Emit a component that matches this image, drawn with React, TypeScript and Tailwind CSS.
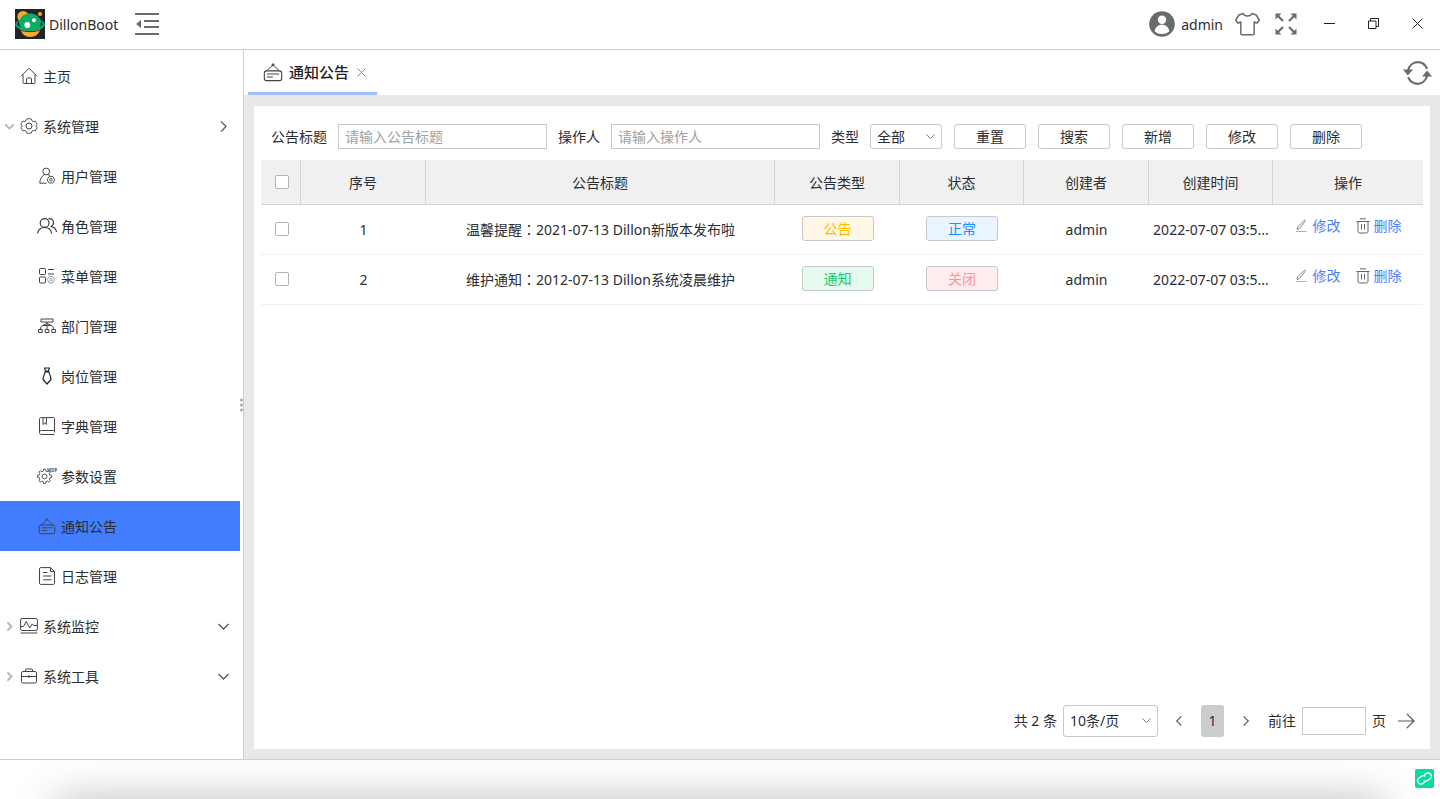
import { useState, type ReactNode } from "react";

type IconProps = { className?: string };

const actionLink = "flex items-center gap-1 text-[#4a80ff] hover:underline";

const systemMenu = [
    { name: "用户管理", icon: UserIcon },
    { name: "角色管理", icon: RoleIcon },
    { name: "菜单管理", icon: MenuIcon },
    { name: "部门管理", icon: DeptIcon },
    { name: "岗位管理", icon: TieIcon },
    { name: "字典管理", icon: BookIcon },
    { name: "参数设置", icon: ConfigIcon },
    { name: "通知公告", icon: NoticeIcon },
    { name: "日志管理", icon: LogIcon },
];

const notices = [
    { id: 1, subject: "温馨提醒", title: "2021-07-13 Dillon新版本发布啦", type: "公告", status: "正常", creator: "admin", time: "2022-07-07 03:5..." },
    { id: 2, subject: "维护通知", title: "2012-07-13 Dillon系统凌晨维护", type: "通知", status: "关闭", creator: "admin", time: "2022-07-07 03:5..." },
];

const tagColors: Record<string, string> = {
    公告: "bg-[#fff8e6] text-[#ffba00]",
    通知: "bg-[#e7faf0] text-[#13ce66]",
    正常: "bg-[#e8f4ff] text-[#1890ff]",
    关闭: "bg-[#ffeded] text-[#ff9292]",
};

export default function App() {
    const [active, setActive] = useState("通知公告");

    return (
        <div className="flex min-h-screen flex-col bg-white font-['Noto_Sans','Noto_Sans_CJK_SC',sans-serif] text-sm leading-5 text-[#2b2d30]">
            <Header />
            <div className="flex flex-1">
                <Sidebar active={active} onSelect={setActive} />
                <main className="flex min-w-0 flex-1 flex-col bg-[#e8e8e8]">
                    <TabBar />
                    <section className="mx-[10px] mt-[11px] mb-[10px] flex flex-1 flex-col bg-white px-[7px] pt-[18px] pb-3">
                        <FilterBar />
                        <NoticeTable />
                        <Pagination />
                    </section>
                </main>
            </div>
            <footer className="relative flex h-10 items-center justify-end overflow-hidden border-t border-[#cfcfcf] px-1.5 pb-0.5">
                <div className="absolute top-full right-14 left-14 h-20 shadow-[0_0_44px_rgba(0,0,0,0.26)]" />
                <button aria-label="连接状态" className="relative flex h-[19px] w-[19px] items-center justify-center rounded-[2px] bg-[#05dba2] text-white">
                    <LinkIcon />
                </button>
            </footer>
        </div>
    );
}

function Header() {
    return (
        <header className="flex h-[50px] items-center border-b border-[#cfcfcf] pr-[17px] pb-0.5 pl-[15px]">
            <Logo />
            <span className="ml-1 pt-0.5">DillonBoot</span>
            <button aria-label="收起菜单" className="ml-[17px] text-[#6b6b6b]">
                <svg width="24" height="24" viewBox="0 0 24 24" fill="none" stroke="currentColor" strokeWidth="2">
                    <path d="M0 2h24M9 9h15M9 15h15M0 22h24" />
                    <path d="M6 8v8L1 12z" fill="currentColor" stroke="none" />
                </svg>
            </button>
            <div className="ml-auto flex items-center text-[#6b6b6b]">
                <svg width="26" height="26" viewBox="0 0 26 26">
                    <circle cx="13" cy="13" r="12.8" fill="currentColor" />
                    <circle cx="13" cy="8.8" r="4.2" fill="#fff" />
                    <path d="M5.8 20.4c.3-4.2 3.3-6.6 7.2-6.6s6.9 2.4 7.2 6.6c-1.9 1.7-4.4 2.5-7.2 2.5s-5.3-.8-7.2-2.5z" fill="#fff" />
                </svg>
                <span className="ml-1.5 pt-0.5 text-[#2b2d30]">admin</span>
                <button aria-label="主题" className="ml-3">
                    <svg width="25" height="24" viewBox="0 0 25 24" fill="none" stroke="currentColor" strokeWidth="1.5" strokeLinejoin="round">
                        <path d="M8 1.5 3.8 3 .8 8l2 3 3-1v11.5c0 .8.5 1.300 1.3 1.3h10.800c.8 0 1.3-.5 1.3-1.3V10l3 1 2-3-3-5L17 1.5c-.8 1.600-2.4 2.5-4.5 2.5S8.800 3.1 8 1.5z" />
                    </svg>
                </button>
                <button aria-label="全屏" className="ml-[15px]">
                    <svg width="22" height="22" viewBox="0 0 22 22" fill="currentColor" stroke="currentColor">
                        <path d="M3 3l5 5M19 3l-5 5M3 19l5-5M19 19l-5-5" strokeWidth="2.2" />
                        <path d="M.5.5h6l-6 6zM21.5.5h-6l6 6zM.5 21.5h6l-6-6zM21.5 21.5h-6l6-6z" stroke="none" />
                    </svg>
                </button>
                <div className="ml-[27px] flex items-center gap-[33px] text-[#222]">
                    <button aria-label="最小化">
                        <svg width="11" height="11" viewBox="0 0 11 11" stroke="currentColor"><path d="M0 5.5h11" /></svg>
                    </button>
                    <button aria-label="还原">
                        <svg width="11" height="11" viewBox="0 0 11 11" fill="none" stroke="currentColor">
                            <path d="M.5 3H8v7.5H.5zM2.5 3V.5h8v8H8" />
                        </svg>
                    </button>
                    <button aria-label="关闭">
                        <svg width="11" height="11" viewBox="0 0 11 11" stroke="currentColor"><path d="M.5.5l10 10M10.5.5l-10 10" /></svg>
                    </button>
                </div>
            </div>
        </header>
    );
}

function Sidebar({ active, onSelect }: { active: string; onSelect: (name: string) => void }) {
    return (
        <aside className="relative w-[244px] shrink-0 border-r border-[#cfcfcf] bg-white pt-px">
            <nav className="w-60">
                <MenuGroup name="主页" icon={<HomeIcon />} />
                <MenuGroup name="系统管理" icon={<GearIcon />} open />
                {systemMenu.map(({ name, icon: Icon }) => (
                    <a
                        key={name}
                        href="#"
                        onClick={(e) => { e.preventDefault(); onSelect(name); }}
                        className={`flex h-[50px] items-center pl-[37px] ${active === name ? "bg-[#437dff]" : "hover:bg-gray-50"}`}
                    >
                        <span className="flex w-5 justify-center"><Icon /></span>
                        <span className="ml-1 pt-0.5">{name}</span>
                    </a>
                ))}
                <MenuGroup name="系统监控" icon={<MonitorIcon />} open={false} />
                <MenuGroup name="系统工具" icon={<ToolIcon />} open={false} />
            </nav>
            <div className="absolute top-1/2 right-0 flex -translate-y-1/2 flex-col gap-0.5">
                {[0, 1, 2].map((i) => <i key={i} className="h-[3px] w-[3px] rounded-full bg-[#a8a8a8]" />)}
            </div>
        </aside>
    );
}

// open is left out for entries that have no children
function MenuGroup({ name, icon, open }: { name: string; icon: ReactNode; open?: boolean }) {
    return (
        <a href="#" className="flex h-[50px] items-center pr-[11px] pl-1 hover:bg-gray-50">
            <span className="flex w-[10px] justify-center text-[#b4b4b4]">
                {open !== undefined && <Chevron className={open ? "h-[9px] w-[9px] stroke-2" : "h-[9px] w-[9px] -rotate-90 stroke-2"} />}
            </span>
            <span className="ml-[5px] flex w-5 justify-center">{icon}</span>
            <span className="ml-1 pt-0.5">{name}</span>
            {open !== undefined && (
                <Chevron className={open ? "ml-auto h-[11px] w-[11px] -rotate-90 text-[#555]" : "ml-auto h-[11px] w-[11px] text-[#555]"} />
            )}
        </a>
    );
}

function TabBar() {
    return (
        <div className="flex h-[45px] items-center justify-between bg-white pr-2 pl-1">
            <div className="flex h-full items-center border-b-[3px] border-[#a3bfff] pt-0.5 pr-[11px] pl-[15px]">
                <NoticeIcon className="h-5 w-5" />
                <span className="ml-1.5 text-[15px] font-medium text-[#1f2124]">通知公告</span>
                <button aria-label="关闭标签" className="ml-2 text-[#888]">
                    <svg width="9" height="9" viewBox="0 0 9 9" stroke="currentColor"><path d="M.5.5l8 8M8.5.5l-8 8" /></svg>
                </button>
            </div>
            <button aria-label="刷新" className="text-[#6b6b6b]">
                <svg width="29" height="26" viewBox="0 0 29 26" fill="none" stroke="currentColor" strokeWidth="2.2">
                    <path d="M5 10.5C6.200 5.5 10 2.2 14.6 2.2c4.2 0 7.8 2.6 9.4 6.6M24.2 15.5c-1.200 5-5 8.300-9.600 8.300-4.2 0-7.800-2.6-9.400-6.600" />
                    <path d="M0 9.5h10l-5.200 6zM29 16.5H19l5.200-6z" fill="currentColor" stroke="none" />
                </svg>
            </button>
        </div>
    );
}

function FilterBar() {
    const field = "h-[25px] w-[209px] border border-[#c8c8c8] bg-white px-1.5 outline-none placeholder:text-[#a0a0a0]";
    return (
        <form className="flex items-center gap-3 pl-[10px]" onSubmit={(e) => e.preventDefault()}>
            <div className="flex items-center gap-[11px]">
                <label htmlFor="title">公告标题</label>
                <input id="title" placeholder="请输入公告标题" className={field} />
                <label htmlFor="operator">操作人</label>
                <input id="operator" placeholder="请输入操作人" className={field} />
                <label htmlFor="type">类型</label>
                <div className="relative">
                    <select id="type" className="block h-[25px] w-[72px] appearance-none rounded-[3px] border border-[#c8c8c8] bg-white px-1.5">
                        <option>全部</option>
                        <option>通知</option>
                        <option>公告</option>
                    </select>
                    <Chevron className="pointer-events-none absolute top-2 right-[7px] h-[9px] w-[9px] text-[#777]" />
                </div>
            </div>
            {["重置", "搜索", "新增", "修改", "删除"].map((text) => (
                <button key={text} className="h-[25px] w-[72px] rounded-[3px] border border-[#c8c8c8] bg-white hover:bg-gray-50">
                    {text}
                </button>
            ))}
        </form>
    );
}

function NoticeTable() {
    const th = "border-r border-b border-[#d4d4d4] pt-0.5 font-normal last:border-r-0";
    const td = "border-b border-[#f0f0f0] text-center";
    return (
        <table className="mt-[11px] w-full table-fixed border-separate border-spacing-0">
            <colgroup>
                <col className="w-10" />
                <col className="w-[125px]" />
                <col />
                <col className="w-[125px]" />
                <col className="w-[124px]" />
                <col className="w-[125px]" />
                <col className="w-[124px]" />
                <col className="w-[150px]" />
            </colgroup>
            <thead className="bg-[#f0f0f0]">
                <tr className="h-[45px]">
                    <th className="border-r border-b border-[#d4d4d4] pl-[14px]"><CheckBox label="全选" /></th>
                    {["序号", "公告标题", "公告类型", "状态", "创建者", "创建时间", "操作"].map((name) => (
                        <th key={name} className={th}>{name}</th>
                    ))}
                </tr>
            </thead>
            <tbody>
                {notices.map((n) => (
                    <tr key={n.id} className="h-[50px]">
                        <td className={`${td} pb-0.5 pl-[14px]`}><CheckBox label={`选择 ${n.id}`} /></td>
                        <td className={td}>{n.id}</td>
                        <td className={td}>
                            {n.subject}<span className="font-['Noto_Sans_CJK_TC',sans-serif]" lang="zh-TW">：</span>{n.title}
                        </td>
                        <td className={`${td} pb-0.5`}><Tag text={n.type} /></td>
                        <td className={`${td} pb-0.5`}><Tag text={n.status} /></td>
                        <td className={td}>{n.creator}</td>
                        <td className={td}>{n.time}</td>
                        <td className={`${td} pb-2`}>
                            <div className="flex items-center justify-center gap-[15px]">
                                <a href="#" className={actionLink}><EditIcon />修改</a>
                                <a href="#" className={actionLink}><TrashIcon />删除</a>
                            </div>
                        </td>
                    </tr>
                ))}
            </tbody>
        </table>
    );
}

function Tag({ text }: { text: string }) {
    return (
        <span className={`mx-auto flex h-[25px] w-[72px] items-center justify-center rounded-[3px] border border-[#c8c8c8] ${tagColors[text]}`}>
            {text}
        </span>
    );
}

function CheckBox({ label }: { label: string }) {
    return (
        <input
            type="checkbox"
            aria-label={label}
            className="block h-[14px] w-[14px] appearance-none rounded-[2px] border border-[#b4b4b4] bg-white checked:bg-[#437dff]"
        />
    );
}

function Pagination() {
    return (
        <div className="mt-auto flex h-8 items-center justify-end pr-2">
            <span>共 2 条</span>
            <div className="relative ml-1.5">
                <select aria-label="每页条数" className="block h-8 w-[95px] appearance-none rounded-[3px] border border-[#c8c8c8] bg-white px-1.5">
                    <option>10条/页</option>
                    <option>20条/页</option>
                </select>
                <Chevron className="pointer-events-none absolute top-[11px] right-[7px] h-[9px] w-[9px] text-[#777]" />
            </div>
            <button aria-label="上一页" className="ml-4 text-[#555]"><Chevron className="h-[10px] w-[10px] rotate-90" /></button>
            <button className="ml-[17px] h-8 w-[23px] rounded-[3px] bg-[#cccccc]">1</button>
            <button aria-label="下一页" className="ml-[17px] text-[#555]"><Chevron className="h-[10px] w-[10px] -rotate-90" /></button>
            <label htmlFor="page" className="ml-[17px]">前往</label>
            <input id="page" className="mx-1.5 h-7 w-16 border border-[#c8c8c8] px-1.5 outline-none" />
            <span>页</span>
            <button aria-label="跳转" className="ml-3 text-[#555]">
                <svg width="17" height="16" viewBox="0 0 17 16" fill="none" stroke="currentColor" strokeWidth="1.2">
                    <path d="M0 8h16M8.8.8 16 8l-7.200 7.200" />
                </svg>
            </button>
        </div>
    );
}

/* ---- icons ---- */

function Svg({ className = "h-[18px] w-[18px]", children }: IconProps & { children: ReactNode }) {
    return (
        <svg className={className} viewBox="0 0 18 18" fill="none" stroke="#444" strokeLinejoin="round">
            {children}
        </svg>
    );
}

function Chevron({ className }: IconProps) {
    return (
        <svg className={className} viewBox="0 0 10 10" fill="none" stroke="currentColor" strokeWidth="1.1">
            <path d="M.4 2.700 5 7.300l4.600-4.600" />
        </svg>
    );
}

function Logo() {
    return (
        <svg width="30" height="30" viewBox="0 0 30 30">
            <path fill="#20252b" d="M0 0h30v30H0z" />
            <circle cx="8" cy="7.5" r="5.6" fill="#fda92f" />
            <circle cx="25" cy="5" r="2" fill="#fda92f" />
            <path d="M5 20c1.5 5 5.5 8 10.300 8S24 25 25.5 20z" fill="#fda92f" />
            <ellipse cx="15" cy="15.5" rx="14.8" ry="6.5" fill="#0cab67" />
            <ellipse cx="15" cy="13.2" rx="10.5" ry="9" fill="#0cab67" />
            <path d="M4 12c-2.500 2.500-2.200 4.500 1.300 6.200C4.300 16 4 14 4 12zM26 12c2.500 2.500 2.200 4.500-1.300 6.200C25.700 16 26 14 26 12z" fill="#20252b" />
            <path d="M5 21c5 2.200 15 2.200 20 0" fill="none" stroke="#20252b" strokeWidth=".9" />
            <circle cx="12.3" cy="16" r="2.9" fill="#fff" />
            <circle cx="19" cy="11.2" r="2" fill="#fff" />
        </svg>
    );
}

function HomeIcon() {
    return (
        <Svg>
            <path d="M1 9.2 9 1.200l8 8M3 7.500v8.200c0 .5.3.8.8.8h10.400c.5 0 .8-.3.8-.8V7.500M6.5 16.500v-4.500c0-.6.4-1 1-1h3c.6 0 1 .4 1 1v4.500" />
        </Svg>
    );
}

function GearIcon() {
    return (
        <Svg>
            <path d="M6.600 1h4.800l1 2.300 1.200.7 2.500-.3 1.900 3.300-1.500 2 1.500 2-1.900 3.300-2.500-.3-1.200.7-1 2.300H6.600l-1-2.300-1.200-.7-2.500.3L0 11l1.500-2L0 7l1.900-3.300 2.500.3 1.200-.7z" transform="translate(.9 .9) scale(.9)" />
            <circle cx="9" cy="9" r="3" />
        </Svg>
    );
}

function UserIcon() {
    return (
        <Svg>
            <circle cx="8.2" cy="4.5" r="3.4" />
            <path d="M8.5 16.200H1.800c0-4.500 1.800-6.500 4.700-8.700M10 7.500l2 1.300" />
            <path d="M11 9.600h3.800l1.900 3.200-1.900 3.200H11l-1.900-3.200z" strokeWidth=".9" />
            <circle cx="12.9" cy="12.8" r="1.300" strokeWidth=".9" />
        </Svg>
    );
}

function RoleIcon() {
    return (
        <svg width="20" height="18" viewBox="0 0 20 18" fill="none" stroke="#333" strokeWidth="1.1">
            <circle cx="7.600" cy="6" r="4.400" />
            <path d="M.6 16.500c.6-3.600 3.500-6 7-6s6.400 2.400 7 6M11.500 1.700c2.800-.6 5 1.200 5 3.800 0 1.900-1.100 3.300-2.900 4 3.400.2 5.400 2.300 5.900 5.500" />
        </svg>
    );
}

function MenuIcon() {
    return (
        <Svg>
            <rect x="1.5" y="1.5" width="6" height="6" rx="1" />
            <rect x="1.5" y="10" width="6" height="6" rx="1" />
            <path d="M10 2.500h6M10 7h6" />
            <path d="M11.200 9.500h3.600l1.800 3.200-1.800 3.200h-3.600l-1.800-3.200z" stroke="#888" strokeWidth=".8" />
            <circle cx="13" cy="12.7" r="1.3" stroke="#888" strokeWidth=".8" />
        </Svg>
    );
}

function DeptIcon() {
    return (
        <Svg>
            <path d="M3 2h12v3H3zM9 5v7M2.500 12.500c0-2.200.8-3.800 3-4.500L9 6.500 12.500 8c2.200.7 3 2.300 3 4.500M5 8.500h8" />
            <path d="M.6 12.500h3.600v3H.6zM7.200 12.500h3.600v3H7.200zM13.800 12.500h3.600v3h-3.600z" />
        </Svg>
    );
}

function TieIcon() {
    return (
        <Svg>
            <path d="M6 1h6M6.800 1.200 7.300 4h3.400l.5-2.800M7.300 4.800C6.500 7 5 10 5 12.500L9 17l4-4.500c0-2.500-1.500-5.500-2.300-7.700z" stroke="#222" strokeWidth="1.2" />
        </Svg>
    );
}

function BookIcon() {
    return (
        <Svg>
            <path d="M16.500 13.500V1.500c0-.6-.3-.9-.9-.9H3c-1 0-1.500.5-1.500 1.500v13.400c0 1.200.7 2 1.800 2h13.200M16.500 13.500H3.300c-1 0-1.800.6-1.800 1.800M16.500 13.500v2M5 .6v6.900l1.700-1.600 1.700 1.600V.6" />
        </Svg>
    );
}

function ConfigIcon() {
    return (
        <svg width="20" height="18" viewBox="0 0 20 18" fill="none" stroke="#444" strokeWidth=".9">
            <path d="M6.600 2.300h2l.4 1.900 1.300.5 1.600-1 1.400 1.400-1 1.600.5 1.300 1.900.4v2l-1.900.4-.5 1.300 1 1.600-1.400 1.400-1.600-1-1.300.5-.4 1.900h-2l-.4-1.900-1.300-.5-1.600 1-1.400-1.400 1-1.600-.5-1.300L.5 10.400v-2L2.400 8l.5-1.300-1-1.600 1.400-1.400 1.600 1 1.300-.5z" />
            <circle cx="7.600" cy="9.400" r="2.400" />
            <text x="10" y="5" fontSize="4.500" fontWeight="700" fill="#555" stroke="none">MDP</text>
        </svg>
    );
}

function NoticeIcon({ className }: IconProps) {
    return (
        <Svg className={className}>
            <rect x="1.2" y="8" width="15.600" height="8.800" rx="2" />
            <circle cx="9" cy="2.600" r=".8" />
            <path d="M3.200 8 8.300 3.200M14.800 8 9.700 3.200M3.500 10.800h11M3.500 13.500h5.500" strokeWidth=".9" />
        </Svg>
    );
}

function LogIcon() {
    return (
        <Svg>
            <path d="M12.500.6H3C2 .6 1.500 1 1.500 2v14c0 1 .5 1.400 1.500 1.400h12c1 0 1.500-.4 1.500-1.400V4.500zM12.500.6v3.900h4M5 5.500h4.500M5 9h8.500M5 12.800h8.500" />
        </Svg>
    );
}

function MonitorIcon() {
    return (
        <Svg>
            <rect x=".6" y="1.500" width="16.800" height="12" rx="1.500" />
            <path d="M1 9.500h2.500L6.200 4.500l3.500 6.500 2.500-4 1.300 1.500H17M.6 16h16.800" />
        </Svg>
    );
}

function ToolIcon() {
    return (
        <Svg>
            <rect x="1.500" y="4.500" width="15" height="11.500" rx="1.500" />
            <path d="M5.500 4.500V2.800c0-.5.3-.8.8-.8h5.400c.5 0 .8.3.8.8v1.700M1.500 9.500h15M9 8v3" />
        </Svg>
    );
}

function EditIcon() {
    return (
        <svg width="14" height="14" viewBox="0 0 14 14" fill="none" stroke="#777">
            <path d="M2 10.500 2.800 7.800 9.200 1.400c.6-.6 1.600.3 1 1L4.500 9.500z" strokeWidth=".9" />
            <path d="M1 12.500h10.500" stroke="#b0b0b0" />
        </svg>
    );
}

function TrashIcon() {
    return (
        <svg width="14" height="16" viewBox="0 0 14 16" fill="none" stroke="#666">
            <path d="M.5 3.500h13M4 .8h6M2 3.500v9.700c0 1.200.6 1.800 1.800 1.800h6.400c1.200 0 1.800-.6 1.800-1.800V3.500M5.500 6v5.500M8.500 6v5.500" />
        </svg>
    );
}

function LinkIcon() {
    return (
        <svg width="17" height="17" viewBox="0 0 24 24" fill="none" stroke="currentColor" strokeWidth="2" strokeLinecap="round">
            <g transform="rotate(-35 12 12)">
                <path d="M14.500 9.500c-.8-1.600-2.200-2.500-4-2.500H6.500c-3 0-5 2-5 4.800s2 4.700 5 4.700h2" />
                <path d="M9.500 14.500c.8 1.600 2.200 2.500 4 2.500h4c3 0 5-2 5-4.800s-2-4.700-5-4.700h-2" />
            </g>
        </svg>
    );
}
